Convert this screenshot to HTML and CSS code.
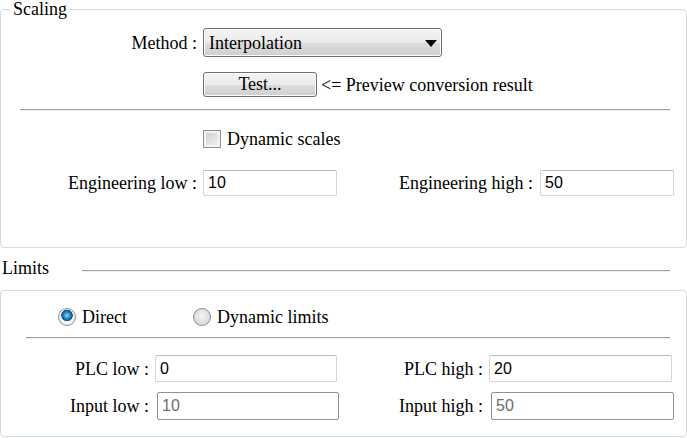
FILE: index.html
```html
<!DOCTYPE html>
<html>
<head>
<meta charset="utf-8">
<link rel="stylesheet" href="styles.css">
</head>
<body>
<fieldset class="group">
  <legend class="legend">Scaling</legend>
  <div class="row row-method">
    <span class="lbl lbl-method">Method :</span>
    <div class="select">
      <span class="select-text">Interpolation</span>
      <svg class="arrow" width="12" height="7" viewBox="0 0 12 7"><path d="M0 0H12L6 7Z" fill="#000"/></svg>
    </div>
  </div>
  <div class="row row-test">
    <button class="btn">Test...</button>
    <span class="hint">&lt;= Preview conversion result</span>
  </div>
  <div class="sep sep-scaling"></div>
  <div class="row row-check">
    <span class="checkbox"></span>
    <span class="check-text">Dynamic scales</span>
  </div>
  <div class="row row-eng">
    <span class="lbl lbl-eng1">Engineering low :</span>
    <input class="field field-eng" value="10">
    <span class="lbl lbl-eng2">Engineering high :</span>
    <input class="field field-eng" value="50">
  </div>
</fieldset>

<div class="limits-head">
  <span class="limits-title">Limits</span>
  <span class="limits-line"></span>
</div>

<div class="box">
  <div class="row row-radio">
    <span class="radio-opt radio-opt1"><span class="radio on"></span><span class="radio-text">Direct</span></span>
    <span class="radio-opt"><span class="radio"></span><span class="radio-text">Dynamic limits</span></span>
  </div>
  <div class="sep sep-limits"></div>
  <div class="row row-plc">
    <span class="lbl lbl-plc1">PLC low :</span>
    <input class="field field-plc1" value="0">
    <span class="lbl lbl-plc2">PLC high :</span>
    <input class="field field-plc2" value="20">
  </div>
  <div class="row row-input">
    <span class="lbl lbl-in1">Input low :</span>
    <input class="field field-in1" value="10" disabled>
    <span class="lbl lbl-in2">Input high :</span>
    <input class="field field-in2" value="50" disabled>
  </div>
</div>
</body>
</html>
```

FILE: styles.css
```css
* { box-sizing: border-box; }
html, body { margin: 0; background: #fff; }
body {
  width: 687px;
  height: 438px;
  overflow: hidden;
  font-family: "Liberation Serif", "DejaVu Serif", "Noto Serif", "FreeSerif", "Nimbus Roman", "Nimbus Roman No9 L", "Times", "Georgia", serif;
  font-size: 18px;
  line-height: 18px;
  color: #000;
}
.legend, .lbl, .select, .btn, .hint, .check-text, .limits-title, .radio-text {
  font-family: inherit;
}

.group {
  margin: 0;
  padding: 0;
  height: 248px;
  border: 1px solid #d6dbe0;
  border-radius: 4px;
  min-width: 0;
}
.legend {
  margin-left: 9px;
  padding: 0 3px;
  line-height: 18px;
}

.row { display: flex; align-items: center; }
.lbl { flex: none; text-align: right; white-space: nowrap; }

.row-method { margin-top: 10px; height: 29px; }
.lbl-method { width: 196px; margin-right: 6px; }
.select {
  width: 239px;
  height: 29px;
  border: 1px solid #707070;
  border-radius: 3px;
  background: linear-gradient(#f3f3f3, #ebebeb 50%, #dddddd 51%, #cfcfcf);
  box-shadow: inset 0 0 0 1px #fcfcfc;
  display: flex;
  align-items: center;
  padding-left: 5px;
  padding-right: 4px;
}
.select-text { flex: 1; }
.arrow { flex: none; margin-top: 1px; }

.row-test { margin-top: 15px; height: 25px; padding-left: 202px; }
.btn {
  width: 114px;
  height: 25px;
  margin: 0;
  padding: 0;
  font-size: 18px;
  color: #000;
  border: 1px solid #707070;
  border-radius: 3px;
  background: linear-gradient(#f3f3f3, #ebebeb 50%, #dddddd 51%, #cfcfcf);
  box-shadow: inset 0 0 0 1px #fcfcfc;
}
.hint { margin-left: 4px; }

.sep {
  height: 2px;
  border-top: 1px solid #a0a0a0;
  border-bottom: 1px solid #efefef;
}
.sep-scaling { margin: 12px 16px 0 19px; }

.row-check { margin-top: 19px; height: 18px; padding-left: 202px; }
.checkbox {
  width: 18px;
  height: 18px;
  border: 1px solid #8e8f8f;
  background: linear-gradient(135deg, #cbcbcb, #f6f6f6);
  box-shadow: inset 0 0 0 2px #f4f4f4;
  flex: none;
}
.check-text { margin-left: 6px; }

.row-eng { margin-top: 22px; height: 26px; }
.lbl-eng1 { width: 196px; margin-right: 6px; }
.lbl-eng2 { width: 196px; margin-right: 7px; }

.field {
  margin: 0;
  height: 26px;
  padding: 0 4px;
  font-family: "Liberation Sans", Arial, sans-serif;
  font-size: 16px;
  color: #000;
  background: #fff;
  border: 1px solid #d2d5d9;
  border-top-color: #b9bcc1;
  border-radius: 2px;
  outline: none;
}
.field:disabled {
  color: #6d6d6d;
  background: #fff;
  border: 1px solid #8f9092;
}
.field-eng { width: 134px; }

.limits-head { display: flex; margin-top: 8px; height: 24px; }
.limits-title { width: 82px; padding-left: 2px; line-height: 24px; flex: none; }
.limits-line {
  flex: 1;
  margin-right: 17px;
  margin-top: 14px;
  height: 2px;
  border-top: 1px solid #a0a0a0;
  border-bottom: 1px solid #efefef;
}

.box {
  margin-top: 10px;
  height: 147px;
  border: 1px solid #d6dbe0;
  border-radius: 4px;
  padding-top: 17px;
}
.row-radio { height: 18px; padding-left: 57px; }
.radio-opt { display: flex; align-items: center; }
.radio-opt1 { width: 135px; }
.radio {
  width: 18px;
  height: 18px;
  border-radius: 50%;
  border: 1px solid #8e8f8f;
  background: radial-gradient(circle at 50% 45%, #f6f6f6 0, #d9d9d9 70%, #c4c4c4 100%);
  flex: none;
}
.radio.on {
  background:
    radial-gradient(circle at 50% 40%, #8fd5f7 0, #2c8cc9 3px, #0e5a93 5px, #0e5a93 5.5px, transparent 6px),
    radial-gradient(circle, #ffffff 0, #f0f0f0 70%, #cfcfcf 100%);
}
.radio-text { margin-left: 6px; }

.sep-limits { margin: 11px 16px 0 25px; }

.row-plc { margin-top: 16px; height: 27px; }
.lbl-plc1 { width: 148px; margin-right: 6px; }
.field-plc1 { width: 182px; height: 27px; }
.lbl-plc2 { width: 146px; margin-right: 6px; }
.field-plc2 { width: 183px; height: 27px; }

.row-input { margin-top: 10px; height: 28px; }
.lbl-in1 { width: 148px; margin-right: 8px; }
.field-in1 { width: 182px; height: 28px; }
.lbl-in2 { width: 144px; margin-right: 8px; }
.field-in2 { width: 183px; height: 28px; }
```
